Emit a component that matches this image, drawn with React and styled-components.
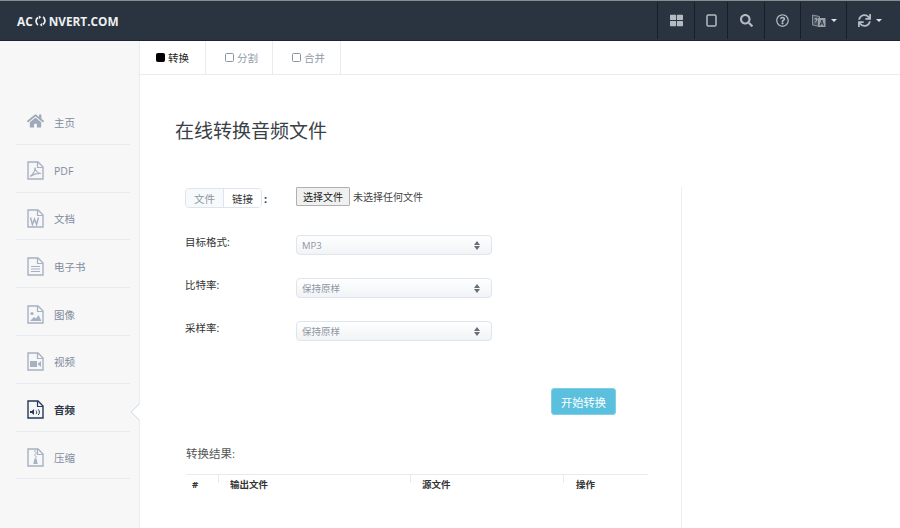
import React from 'react';
import styled, { createGlobalStyle } from 'styled-components';
import { FaHome, FaThLarge, FaSearch, FaRegQuestionCircle, FaSync } from 'react-icons/fa';

const sans = `"Open Sans", "Noto Sans CJK SC", sans-serif`;

const Global = createGlobalStyle`
  html, body { margin: 0; padding: 0; background: #fff; }
  body { font-family: ${sans}; width: 900px; height: 528px; overflow: hidden; }
  * { box-sizing: border-box; }
`;

const Page = styled.div`
  width: 900px; height: 528px; display: flex; flex-direction: column; overflow: hidden;
`;
const Header = styled.header`
  height: 41px; flex: none; display: flex; justify-content: space-between; align-items: stretch;
  background: #2a3440; border-top: 1px solid #8a8d90; border-bottom: 1px solid #1d2530;
`;
const Logo = styled.div`
  display: flex; align-items: center; padding-left: 17px; color: #eef0f2;
  font-weight: 700; font-size: 11.800px;
  svg { margin: 0 3px 0 2px; }
`;
const ToolBar = styled.div`display: flex; padding-top: 1px; padding-bottom: 1px;`;
const Tool = styled.div`
  width: ${p => p.$w}px; display: flex; align-items: center; justify-content: center; gap: 5px;
  padding-right: ${p => p.$pr || 0}px; padding-left: ${p => p.$pl || 0}px;
  color: #b4bac2; border-left: 1px solid #171e27;
`;
const Caret = styled.span`
  width: 0; height: 0; border-left: 3.500px solid transparent; border-right: 3.500px solid transparent;
  border-top: 3.500px solid #dfe1e4;
`;
const Body = styled.div`flex: 1; display: flex; min-height: 0;`;
const Side = styled.aside`
  width: 140px; flex: none; background: #f7f7f8; border-right: 1px solid #e8ebf0; padding: 56px 9px 0 16px; position: relative;
`;
const Item = styled.div`
  height: 47.8px; border-bottom: 1px solid #e7eaef; display: flex; align-items: center; gap: 10px; padding: 5px 0 0 11px;
  color: ${p => p.$active ? '#233a5a' : '#a6b1c2'}; position: relative;
`;
const ItemIcon = styled.span`width: 17px; display: flex; justify-content: center; flex: none;`;
const ItemText = styled.span`
  font-size: 10.500px; color: ${p => p.$active ? '#2c3644' : '#7f8b9c'}; font-weight: ${p => p.$active ? 600 : 400};
`;
const Pointer = styled.span`
  position: absolute; right: -16px; top: 21px; width: 14px; height: 14px; background: #fff;
  border-left: 1px solid #cfdbe8; border-bottom: 1px solid #cfdbe8; transform: rotate(45deg) scale(.85);
`;
const Main = styled.main`flex: 1; min-width: 0; display: flex; flex-direction: column;`;
const Tabs = styled.nav`height: 34px; flex: none; display: flex; border-bottom: 1px solid #e8ebf0;`;
const Tab = styled.div`
  width: ${p => p.$w}px; display: flex; align-items: center; gap: 3px; padding-left: ${p => p.$pl}px;
  border-right: 1px solid #e8ebf0; font-size: 10.500px;
  color: ${p => p.$active ? '#222' : '#8f99a7'};
`;
const Box = styled.span`
  width: 9px; height: 9px; border-radius: 1.500px; background: ${p => p.$on ? '#000' : '#fff'};
  border: 1px solid ${p => p.$on ? '#000' : '#8a94a3'};
`;
const Title = styled.h1`
  margin: 42px 0 0 35px; font-size: 19px; font-weight: 400; line-height: 28px; color: #3a3f47; height: 28px;
`;
const Columns = styled.div`flex: 1; display: flex; margin-top: 42px; min-height: 0;`;
const FormCol = styled.div`
  width: 542px; padding-left: 45px; padding-right: 33px; border-right: 1px solid #eceef3;
`;
const Row = styled.div`
  display: grid; grid-template-columns: 111px 196px; align-items: center; height: 20px;
  margin-top: ${p => p.$mt}px;
`;
const Label = styled.label`font-size: 10.500px; color: #333; position: relative; top: -4px;`;
const Segment = styled.div`display: flex; align-items: center; font-size: 11px; font-weight: 700; color: #333; gap: 2px; position: relative; top: 1px;`;
const SegWrap = styled.div`
  display: flex; height: 20px; border: 1px solid #dce4ee; border-radius: 4px; overflow: hidden;
`;
const SegBtn = styled.span`
  width: ${p => p.$w}px; display: flex; align-items: center; justify-content: center; font-size: 10.500px; font-weight: 400;
  color: ${p => p.$active ? '#8a97a8' : '#333'}; background: ${p => p.$active ? '#f7f9fb' : '#fff'};
  border-right: ${p => p.$active ? '1px solid #dce4ee' : 'none'};
`;
const FileRow = styled.div`display: flex; align-items: center; gap: 3px; font-size: 10px; color: #444; white-space: nowrap; position: relative; top: -1px;`;
const FileBtn = styled.span`
  height: 19px; width: 54px; display: flex; align-items: center; justify-content: center;
  background: #f0f0f0; border: 1px solid #b0b0b0; border-radius: 1px; color: #222; font-size: 10px;
`;
const Select = styled.div`
  height: 20px; display: flex; align-items: center; justify-content: space-between; padding: 0 11px 0 5px;
  border: 1px solid #dde5ee; border-radius: 4px; font-size: 9.500px; color: #8e96a2;
  background: linear-gradient(#fff, #f1f3f6);
`;
const Arrows = styled.span`
  display: flex; flex-direction: column; gap: 1px;
  i { width: 0; height: 0; border-left: 3px solid transparent; border-right: 3px solid transparent; }
  i:first-child { border-bottom: 4px solid #666e78; }
  i:last-child { border-top: 4px solid #666e78; }
`;
const ActionRow = styled.div`display: flex; justify-content: flex-end; margin-top: 47px;`;
const Submit = styled.button`
  width: 65px; height: 27px; padding: 0; font: inherit; font-size: 11.250px; color: #fff; background: #5bc0de;
  border: 1px solid #7fcfe6; border-radius: 3px; margin-right: 32px;
`;
const ResultTitle = styled.div`font-size: 11.500px; color: #555; margin: 31px 0 0 1px; line-height: 16px;`;
const Table = styled.div`
  margin: 12px 0 0 1px; width: 462px; border-top: 1px solid #e8eaf1; display: grid; grid-template-columns: 32px 192px 153px 85px;
`;
const Th = styled.div`
  height: 20px; padding: 3px 0 0 ${p => p.$pl}px; font-size: 9.500px; font-weight: 700; color: #333; line-height: 14px; position: relative;
  ${p => p.$bar ? `&::before { content: ''; position: absolute; left: 0; top: 0; width: 1px; height: 8px; background: #e8eaf1; }` : ''}
`;

const FileIcon = ({ children, color = '#a6b1c2' }) => (
  <svg width="17" height="19" viewBox="0 0 17 19" fill="none">
    <path d="M1 1h10l5 5v12H1z" stroke={color} strokeWidth="1.400" />
    <path d="M10.500 1v5.500H16" stroke={color} strokeWidth="1.200" />
    {children}
  </svg>
);

const LogoSync = () => (
  <svg width="11" height="12" viewBox="0 0 11 12" fill="none">
    <path d="M3 2.500C1.300 3.700.800 6 1.400 7.800c.3.900.9 1.700 1.600 2.100" stroke="#eef0f2" strokeWidth="1.700" />
    <path d="M8 9.500c1.700-1.200 2.200-3.500 1.600-5.300-.3-.9-.9-1.700-1.600-2.100" stroke="#eef0f2" strokeWidth="1.700" />
    <path d="M3.800.5L6.300 2 3.800 4.200z" fill="#eef0f2" />
    <path d="M7.200 11.500L4.700 10l2.500-2.200z" fill="#eef0f2" />
  </svg>
);

const g = '#a6b1c2';
const nav = [
  ['主页', <FaHome size={18} color="#9ea9ba" style={{ marginTop: -3 }} />],
  ['PDF', <FileIcon><path d="M3 15.500C6 13.500 8 10 8 6.500c.3 3.500 2 5.500 6 6-3.500-.4-7 .5-11 3z" stroke={g} strokeWidth="1.100" /></FileIcon>],
  ['文档', <FileIcon><path d="M3.500 8.500l1.900 7 2.100-5.500 2.100 5.500 1.900-7" stroke={g} strokeWidth="1.500" /></FileIcon>],
  ['电子书', <FileIcon><path d="M4 9.500h9M4 12h9M4 14.500h9" stroke={g} strokeWidth="1.200" /></FileIcon>],
  ['图像', <FileIcon><circle cx="5" cy="8.500" r="1.600" fill={g} /><path d="M3 16l4-4 2 1.500 2.500-3.500 3 6z" fill={g} /></FileIcon>],
  ['视频', <FileIcon><rect x="3" y="9" width="7" height="6" fill={g} /><path d="M10.500 12l3.500-3v6z" fill={g} /></FileIcon>],
  ['音频', <FileIcon color="#233a5a"><path d="M3 11h1.800L7 9v6l-2.200-2H3z" fill="#233a5a" /><path d="M9 10.500c.9 1 .9 2.500 0 3.500M11.200 9.300c1.600 1.700 1.600 4 0 5.700" stroke="#233a5a" /></FileIcon>, true],
  ['压缩', <FileIcon><path d="M7 3h2M8 5h2M7 7h2M8 9h2" stroke={g} /><path d="M7.500 10.500h2l1.200 5.500H6.300z" fill={g} /></FileIcon>],
];

export default function App() {
  return (
    <Page>
      <Global />
      <Header>
        <Logo>AC<LogoSync />NVERT.COM</Logo>
        <ToolBar>
          <Tool $w={37}><FaThLarge size={13} /></Tool>
          <Tool $w={33}>
            <svg width="11" height="13" viewBox="0 0 11 13" fill="none"><rect x="1" y="1" width="9" height="11" rx="1.300" stroke="#b4bac2" strokeWidth="1.500" /></svg>
          </Tool>
          <Tool $w={37}><FaSearch size={13} /></Tool>
          <Tool $w={36}><FaRegQuestionCircle size={13} /></Tool>
          <Tool $w={46} $pl={2}>
            <svg width="14" height="14" viewBox="0 0 14 14" fill="none">
              <path d="M.5 1l7 1.500v10l-7-1.500z" stroke="#8b929b" fill="#4a525d" />
              <rect x="6" y="4" width="7.500" height="9" fill="#98a0a9" />
              <path d="M8 11.500L9.800 6l1.800 5.500M8.700 9.800h2.200" stroke="#2a3440" />
              <path d="M2.500 5h3M4 3.800v1.200M2.800 8.500c1.300-.8 2-2 2.200-3.500" stroke="#c2c6cb" strokeWidth=".8" />
            </svg>
            <Caret />
          </Tool>
          <Tool $w={54} $pr={7}><FaSync size={13} /><Caret /></Tool>
        </ToolBar>
      </Header>
      <Body>
        <Side>
          {nav.map(([t, icon, active]) => (
            <Item key={t} $active={active}>
              <ItemIcon>{icon}</ItemIcon>
              <ItemText $active={active}>{t}</ItemText>
              {active && <Pointer />}
            </Item>
          ))}
        </Side>
        <Main>
          <Tabs>
            <Tab $w={66} $pl={16} $active><Box $on />转换</Tab>
            <Tab $w={67} $pl={19}><Box />分割</Tab>
            <Tab $w={68} $pl={19}><Box />合并</Tab>
          </Tabs>
          <Title>在线转换音频文件</Title>
          <Columns>
            <FormCol>
              <Row $mt={0}>
                <Segment>
                  <SegWrap>
                    <SegBtn $w={38} $active>文件</SegBtn>
                    <SegBtn $w={37}>链接</SegBtn>
                  </SegWrap>
                  :
                </Segment>
                <FileRow><FileBtn>选择文件</FileBtn>未选择任何文件</FileRow>
              </Row>
              <Row $mt={28}>
                <Label>目标格式:</Label>
                <Select>MP3<Arrows><i /><i /></Arrows></Select>
              </Row>
              <Row $mt={23}>
                <Label>比特率:</Label>
                <Select>保持原样<Arrows><i /><i /></Arrows></Select>
              </Row>
              <Row $mt={23}>
                <Label>采样率:</Label>
                <Select>保持原样<Arrows><i /><i /></Arrows></Select>
              </Row>
              <ActionRow><Submit>开始转换</Submit></ActionRow>
              <ResultTitle>转换结果:</ResultTitle>
              <Table>
                <Th $pl={6}>#</Th>
                <Th $pl={12} $bar>输出文件</Th>
                <Th $pl={12} $bar>源文件</Th>
                <Th $pl={13} $bar>操作</Th>
              </Table>
            </FormCol>
          </Columns>
        </Main>
      </Body>
    </Page>
  );
}
